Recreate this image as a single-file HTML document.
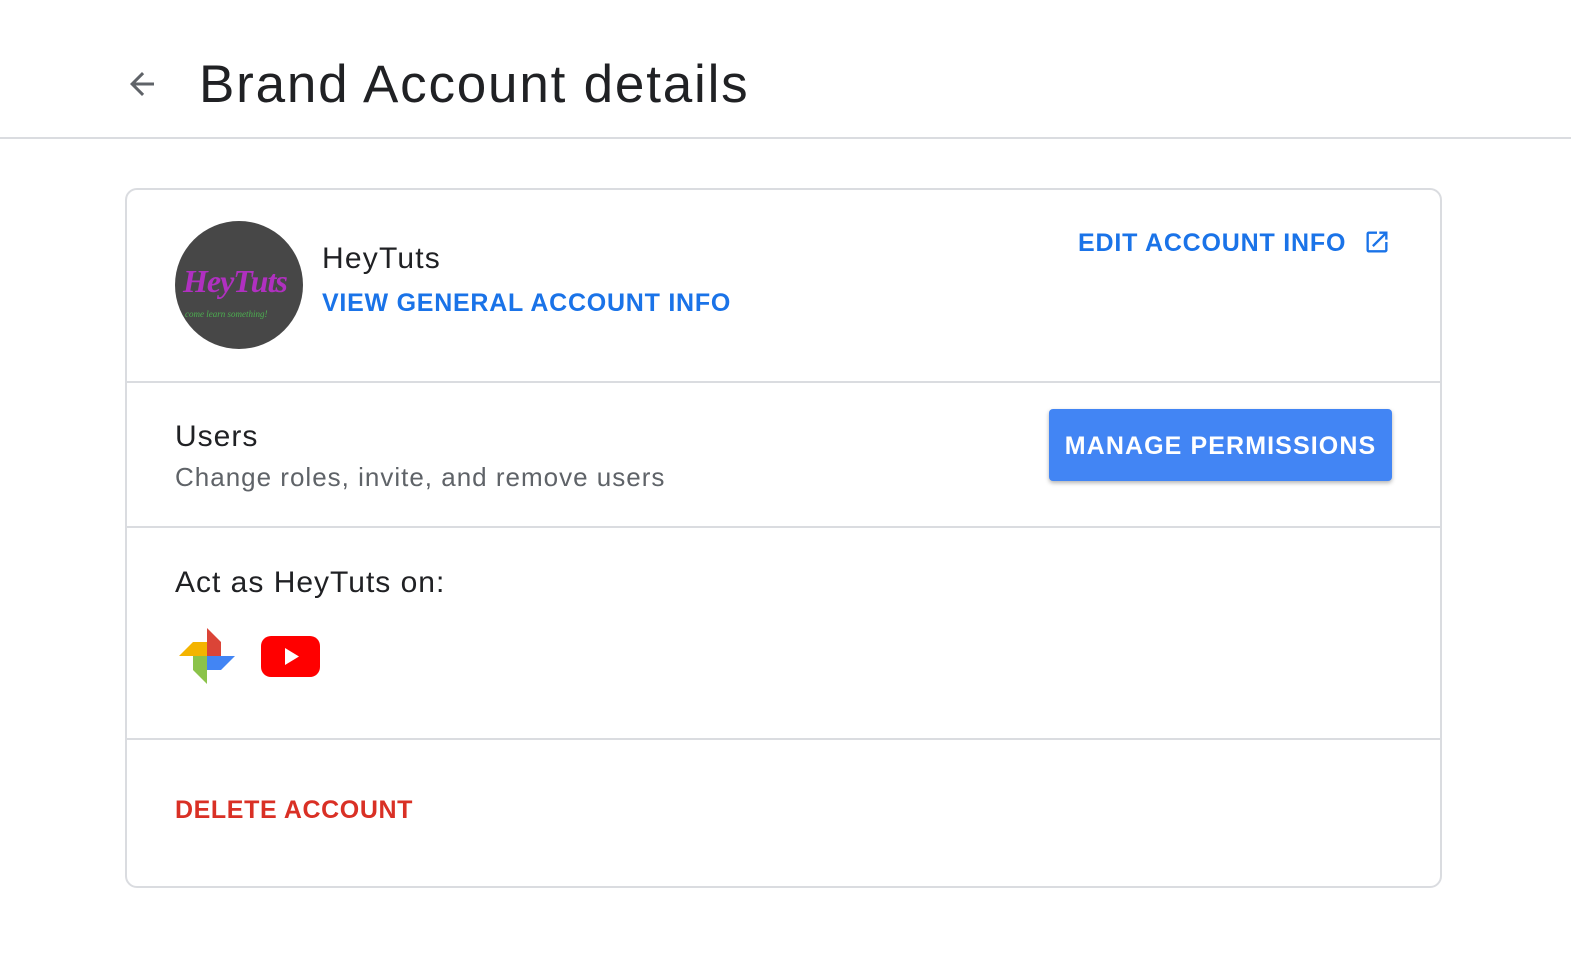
<!DOCTYPE html>
<html><head><meta charset="utf-8"><style>
*{margin:0;padding:0;box-sizing:border-box}
body{width:1571px;height:977px;background:#fff;font-family:"Liberation Sans",sans-serif;position:relative;overflow:hidden;color:#202124}
.a{position:absolute;white-space:nowrap}
.hr{position:absolute;left:127px;width:1313px;height:2px;background:#dadce0}
.blue{color:#1a73e8;font-weight:bold;font-size:25px;letter-spacing:0.8px}
</style></head><body>
<svg class="a" style="left:124px;top:66px" width="36" height="36" viewBox="0 0 24 24"><path d="M20 11H7.83l5.59-5.59L12 4l-8 8 8 8 1.41-1.41L7.83 13H20v-2z" fill="#5f6368"/></svg>
<div class="a" style="left:199px;top:54px;font-size:53px;letter-spacing:1.8px">Brand Account details</div>
<div class="a" style="left:0;top:137px;width:1571px;height:2px;background:#dadce0"></div>
<div class="a" style="left:125px;top:188px;width:1317px;height:700px;border:2px solid #dadce0;border-radius:12px"></div>
<div class="a" style="left:175px;top:221px;width:128px;height:128px;border-radius:50%;background:#474747;overflow:hidden">
<div class="a" style="left:8px;top:42px;font-family:'Liberation Serif',serif;font-style:italic;font-size:32px;color:#b030c0;font-weight:bold;letter-spacing:-1px">HeyTuts</div>
<div class="a" style="left:10px;top:88px;font-family:'Liberation Serif',serif;font-style:italic;font-size:9px;color:#4caf50">come learn something!</div>
</div>
<div class="a" style="left:322px;top:242px;font-size:30px;letter-spacing:1.2px">HeyTuts</div>
<div class="a blue" style="left:322px;top:289px;letter-spacing:0.75px">VIEW GENERAL ACCOUNT INFO</div>
<div class="a blue" style="left:1078px;top:229px">EDIT ACCOUNT INFO</div>
<svg class="a" style="left:1363px;top:228px" width="28" height="28" viewBox="0 0 24 24"><path d="M19 19H5V5h7V3H5a2 2 0 00-2 2v14a2 2 0 002 2h14c1.1 0 2-.9 2-2v-7h-2v7zM14 3v2h3.59l-9.83 9.83 1.41 1.41L19 6.41V10h2V3h-7z" fill="#1a73e8"/></svg>
<div class="hr" style="top:381px"></div>
<div class="a" style="left:175px;top:420px;font-size:30px;letter-spacing:1px">Users</div>
<div class="a" style="left:175px;top:462px;font-size:26px;color:#5f6368;letter-spacing:1px">Change roles, invite, and remove users</div>
<div class="a" style="left:1049px;top:409px;width:343px;height:72px;background:#4285f4;border-radius:4px;box-shadow:0 2px 4px rgba(0,0,0,.3);color:#fff;font-weight:bold;font-size:25px;text-align:center;line-height:74px;letter-spacing:1.1px">MANAGE PERMISSIONS</div>
<div class="hr" style="top:526px"></div>
<div class="a" style="left:175px;top:566px;font-size:30px;letter-spacing:1px">Act as HeyTuts on:</div>
<svg class="a" style="left:175px;top:626px" width="64" height="62" viewBox="175 626 64 62">
<polygon points="207,656 207,628 221,642 221,656" fill="#db4437"/>
<polygon points="207,656 179,656 193,642 207,642" fill="#f4b400"/>
<polygon points="207,656 235,656 221,670 207,670" fill="#4285f4"/>
<polygon points="207,656 207,684 193,670 193,656" fill="#8bc34a"/>
</svg>
<div class="a" style="left:261px;top:636px;width:59px;height:41px;background:#f00;border-radius:10px"></div>
<svg class="a" style="left:261px;top:636px" width="59" height="41"><polygon points="24,12 24,29 38,20.5" fill="#fff"/></svg>
<div class="hr" style="top:738px"></div>
<div class="a" style="left:175px;top:796px;font-size:25px;font-weight:bold;color:#d93025;letter-spacing:0.6px">DELETE ACCOUNT</div>
</body></html>
